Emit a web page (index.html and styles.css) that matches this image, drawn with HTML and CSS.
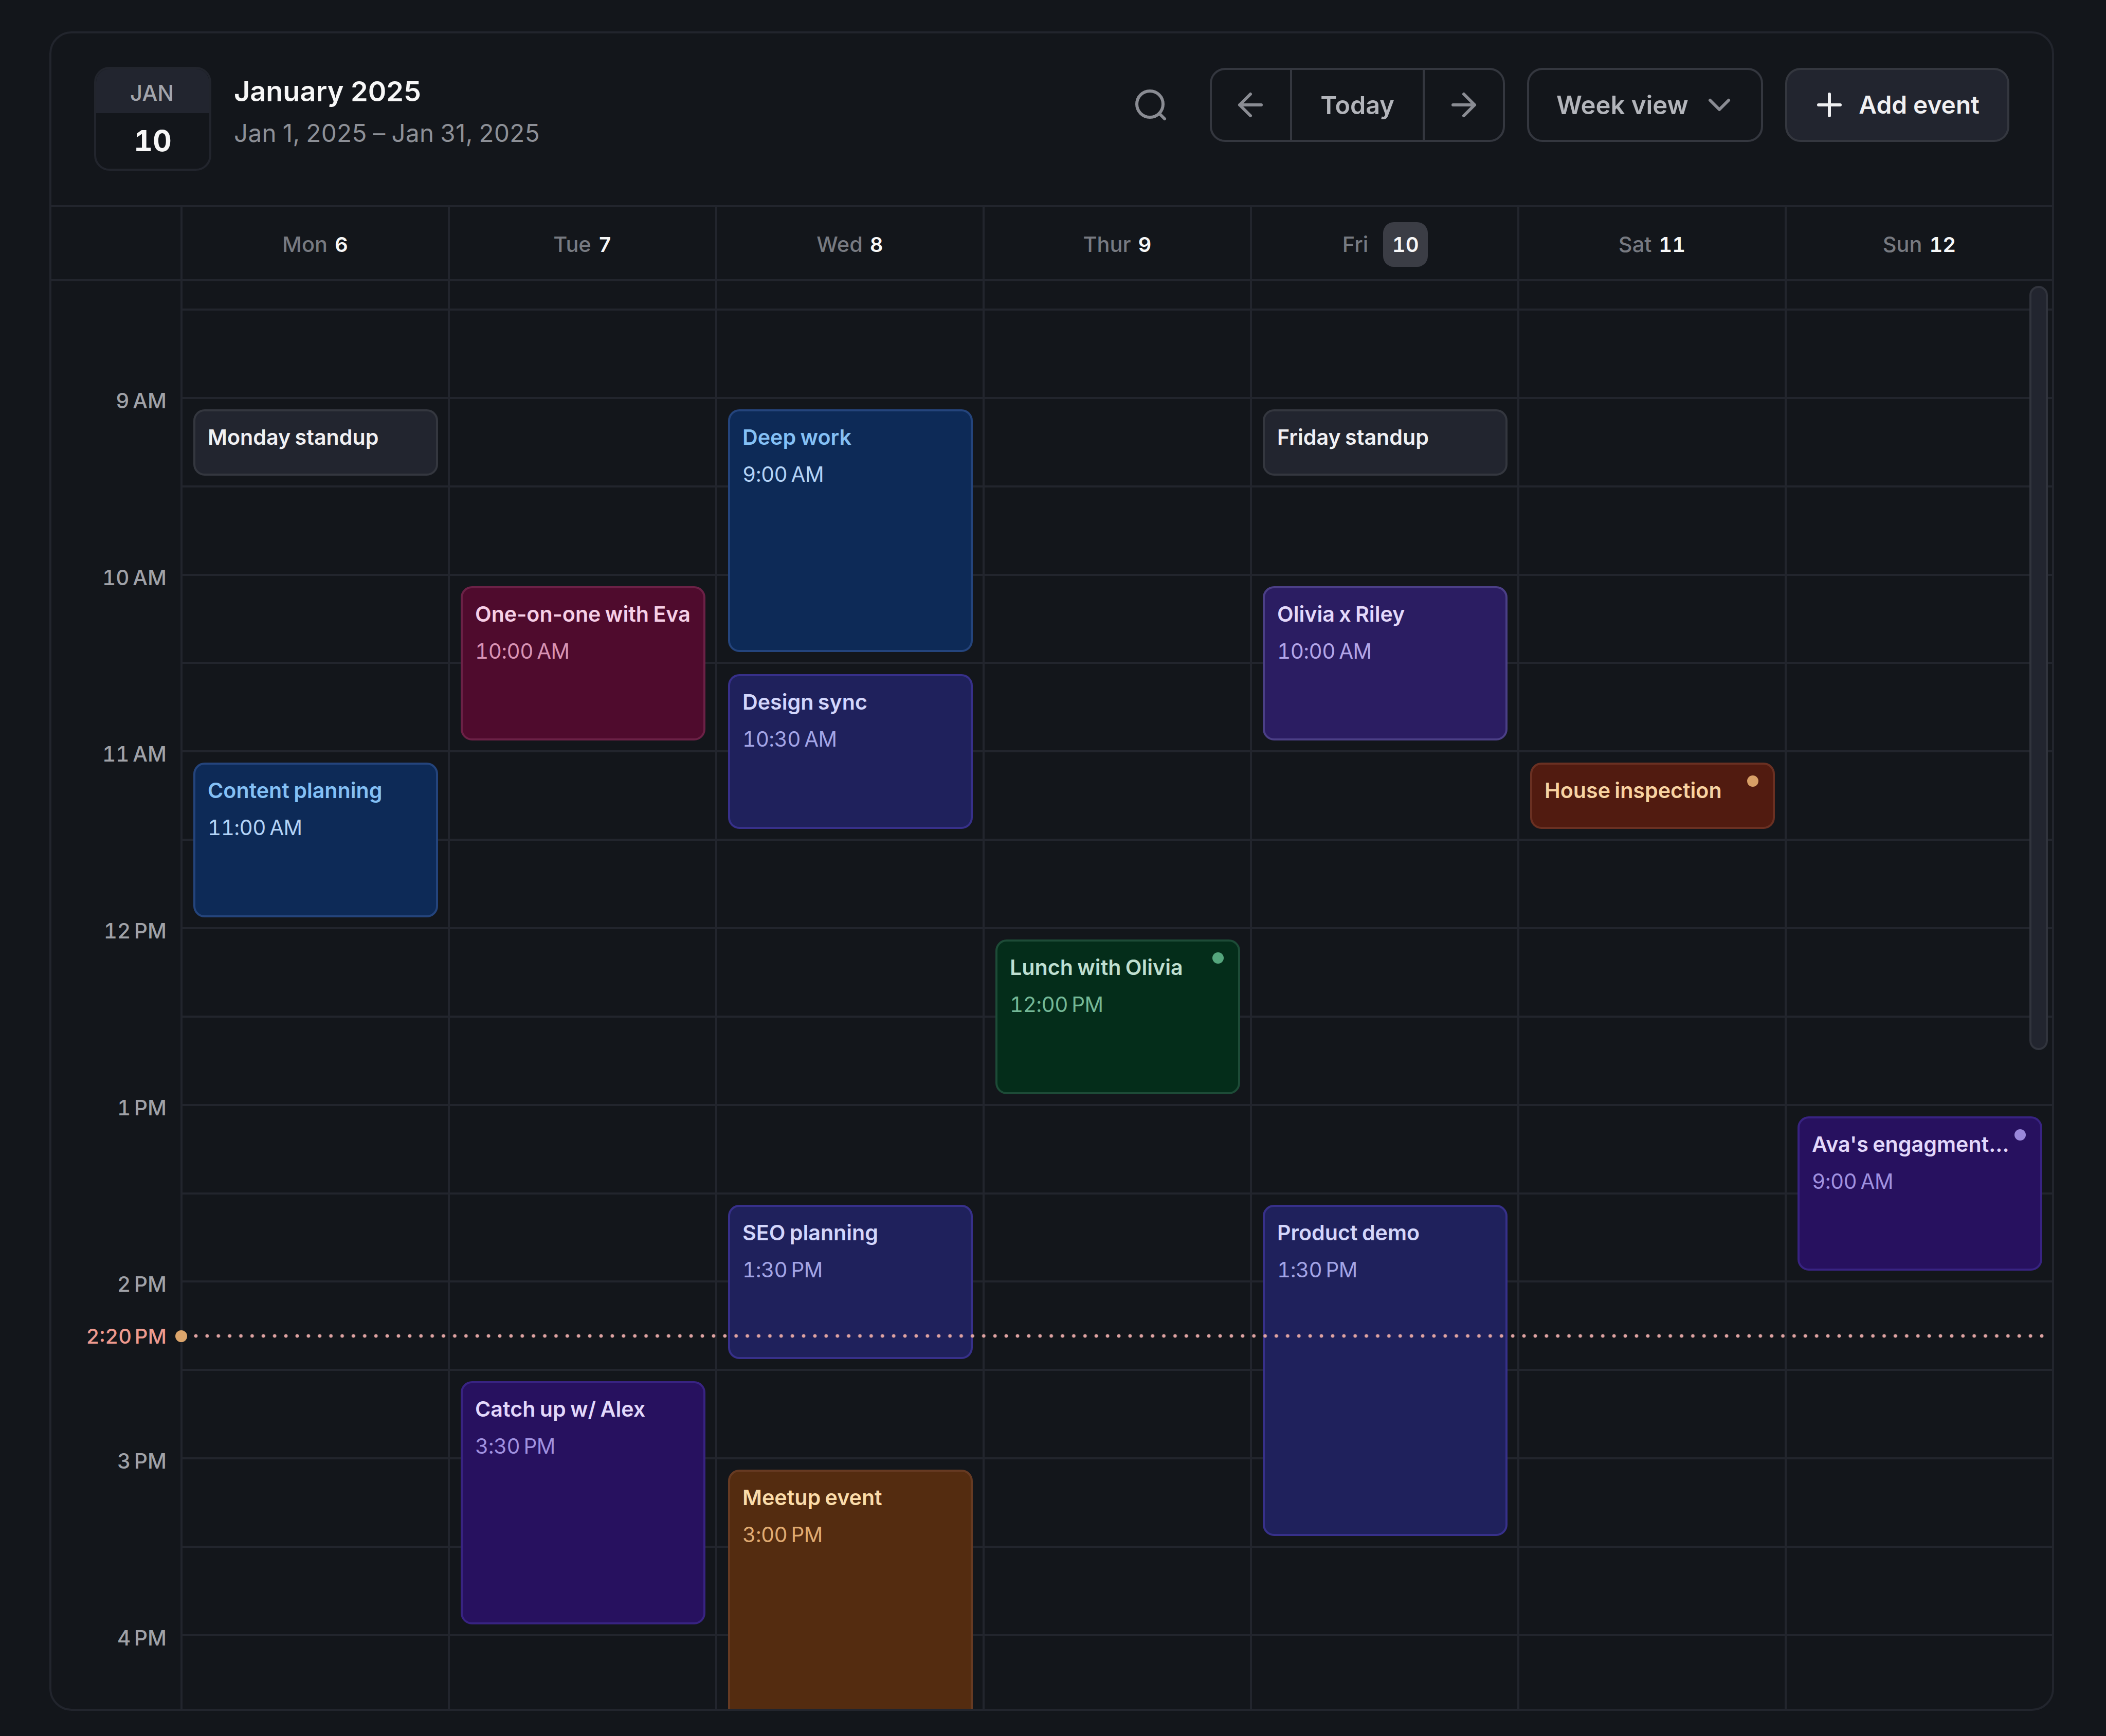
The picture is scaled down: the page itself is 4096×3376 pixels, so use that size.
FILE: index.html
```html
<!DOCTYPE html>
<html lang="en">
<head>
    <meta charset="UTF-8">
    <meta name="viewport" content="width=device-width, initial-scale=1.0">
    <title>Calendar - January 2025</title>
    <link rel="stylesheet" href="styles.css">
</head>
<body>
    <main class="calendar">
        <header class="calendar-header">
            <div class="date-badge">
                <span class="date-badge-month">JAN</span>
                <span class="date-badge-day">10</span>
            </div>
            <div class="heading">
                <h1 class="heading-title">January 2025</h1>
                <p class="heading-range">Jan 1, 2025 – Jan 31, 2025</p>
            </div>

            <div class="toolbar">
                <button class="icon-btn" aria-label="Search">
                    <svg class="icon" viewBox="0 0 24 24"><path d="M21 21l-3.5-3.5"/><circle cx="11.5" cy="11.5" r="8.5"/></svg>
                </button>
                <div class="btn-group">
                    <button class="group-btn group-arrow" aria-label="Previous week">
                        <svg class="icon" viewBox="0 0 24 24"><path d="M19 12H5M12 19l-7-7 7-7"/></svg>
                    </button>
                    <button class="group-btn group-today">Today</button>
                    <button class="group-btn group-arrow" aria-label="Next week">
                        <svg class="icon" viewBox="0 0 24 24"><path d="M5 12h14M12 5l7 7-7 7"/></svg>
                    </button>
                </div>
                <button class="btn btn-view">
                    Week view
                    <svg class="icon" viewBox="0 0 24 24"><path d="M6 9l6 6 6-6"/></svg>
                </button>
                <button class="btn btn-add">
                    <svg class="icon" viewBox="0 0 24 24"><path d="M12 5v14M5 12h14"/></svg>
                    Add event
                </button>
            </div>
        </header>

        <div class="weekdays">
            <div class="weekday-spacer"></div>
            <div class="weekday">Mon <b>6</b></div>
            <div class="weekday">Tue <b>7</b></div>
            <div class="weekday">Wed <b>8</b></div>
            <div class="weekday">Thur <b>9</b></div>
            <div class="weekday today">Fri <b>10</b></div>
            <div class="weekday">Sat <b>11</b></div>
            <div class="weekday">Sun <b>12</b></div>
        </div>

        <div class="week-body">
            <div class="hours">
                <span class="hour from-0900">9 AM</span>
                <span class="hour from-1000">10 AM</span>
                <span class="hour from-1100">11 AM</span>
                <span class="hour from-1200">12 PM</span>
                <span class="hour from-1300">1 PM</span>
                <span class="hour from-1400">2 PM</span>
                <span class="hour from-1500">3 PM</span>
                <span class="hour from-1600">4 PM</span>
            </div>

            <!-- half hour lines -->
            <div class="slots">
                <i></i><i></i><i></i><i></i><i></i><i></i><i></i><i></i>
                <i></i><i></i><i></i><i></i><i></i><i></i><i></i><i></i>
            </div>

            <div class="day mon">
                <article class="event gray from-0900 half-1">
                    <h2>Monday standup</h2>
                </article>
                <article class="event blue from-1100 half-2">
                    <h2>Content planning</h2>
                    <p>11:00 AM</p>
                </article>
            </div>

            <div class="day tue">
                <article class="event pink from-1000 half-2">
                    <h2>One-on-one with Eva</h2>
                    <p>10:00 AM</p>
                </article>
                <article class="event violet from-1430 half-3">
                    <h2>Catch up w/ Alex</h2>
                    <p>3:30 PM</p>
                </article>
            </div>

            <div class="day wed">
                <article class="event blue from-0900 half-3">
                    <h2>Deep work</h2>
                    <p>9:00 AM</p>
                </article>
                <article class="event indigo from-1030 half-2">
                    <h2>Design sync</h2>
                    <p>10:30 AM</p>
                </article>
                <article class="event indigo from-1330 half-2">
                    <h2>SEO planning</h2>
                    <p>1:30 PM</p>
                </article>
                <article class="event orange from-1500 half-4">
                    <h2>Meetup event</h2>
                    <p>3:00 PM</p>
                </article>
            </div>

            <div class="day thu">
                <article class="event green from-1200 half-2">
                    <h2>Lunch with Olivia</h2>
                    <p>12:00 PM</p>
                    <span class="event-dot"></span>
                </article>
            </div>

            <div class="day fri">
                <article class="event gray from-0900 half-1">
                    <h2>Friday standup</h2>
                </article>
                <article class="event purple from-1000 half-2">
                    <h2>Olivia x Riley</h2>
                    <p>10:00 AM</p>
                </article>
                <article class="event indigo from-1330 half-4">
                    <h2>Product demo</h2>
                    <p>1:30 PM</p>
                </article>
            </div>

            <div class="day sat">
                <article class="event red from-1100 half-1">
                    <h2>House inspection</h2>
                    <span class="event-dot"></span>
                </article>
            </div>

            <div class="day sun">
                <article class="event violet from-1300 half-2">
                    <h2>Ava's engagment...</h2>
                    <p>9:00 AM</p>
                    <span class="event-dot"></span>
                </article>
            </div>

            <div class="now">
                <span class="now-label">2:20 PM</span>
                <span class="now-dot"></span>
                <span class="now-line"></span>
            </div>
            <div class="scrollbar"></div>
        </div>
    </main>
</body>
</html>
```
FILE: styles.css
```css
:root {
    --bg: #13161b;
    --line: #22252d;
    --border: #34373f;
    --surface: #22252f;
    --gutter: 251px;
    --day: 520px;
    --row: 171.87px;
}

* {
    margin: 0;
    padding: 0;
    box-sizing: border-box;
}

body {
    width: 4096px;
    height: 3376px;
    padding: 61px 101px 48px 96px;
    background: var(--bg);
    color: #f7f7f7;
    font-family: 'Inter', 'Liberation Sans', sans-serif;
    overflow: hidden;
}

.calendar {
    display: flex;
    flex-direction: column;
    width: 3899px;
    height: 3266px;
    border: 4px solid var(--line);
    border-radius: 43px;
    overflow: hidden;
}

/* Header */
.calendar-header {
    display: flex;
    align-items: flex-start;
    height: 338px;
    flex: none;
    padding: 67px 83px 0 83px;
    border-bottom: 4px solid var(--line);
}

.date-badge {
    display: flex;
    flex-direction: column;
    width: 228px;
    height: 202px;
    margin-top: -2px;
    border: 4px solid var(--line);
    border-radius: 30px;
    overflow: hidden;
    text-align: center;
}

.date-badge-month {
    height: 86px;
    line-height: 93px;
    padding-right: 3px;
    background: var(--surface);
    color: #a3a5ac;
    font-size: 42px;
    font-weight: 500;
}

.date-badge-day {
    line-height: 107px;
    font-size: 57px;
    font-weight: 700;
    font-variant-numeric: tabular-nums;
}

.heading {
    margin-left: 44px;
}

.heading-title {
    font-size: 54px;
    font-weight: 600;
    line-height: 84px;
    margin-top: 4px;
}

.heading-range {
    color: #8d9097;
    font-size: 47.5px;
    line-height: 78px;
    word-spacing: -2px;
    letter-spacing: 0.4px;
}

.toolbar {
    display: flex;
    gap: 43px;
    margin-left: auto;
}

button {
    background: none;
    border: none;
    color: #b3b5bb;
    font-family: inherit;
    font-size: 48.5px;
    font-weight: 600;
    white-space: nowrap;
}

.icon {
    display: block;
    flex: none;
    width: 72px;
    height: 72px;
    fill: none;
    stroke: #8a8c93;
    stroke-width: 2;
    stroke-linecap: round;
    stroke-linejoin: round;
}

.icon-btn {
    display: flex;
    align-items: center;
    justify-content: center;
    width: 144px;
    height: 144px;
}

.btn-group {
    display: flex;
    width: 574px;
    height: 144px;
    border: 4px solid var(--border);
    border-radius: 30px;
}

.group-btn {
    display: flex;
    align-items: center;
    justify-content: center;
}

.group-arrow {
    width: 152px;
    padding-right: 2px;
}

.group-arrow:last-child {
    padding: 0;
}

.group-today {
    flex: 1;
    border-left: 4px solid var(--border);
    border-right: 4px solid var(--border);
}

.btn {
    display: flex;
    align-items: center;
    justify-content: space-between;
    height: 144px;
    border: 4px solid var(--border);
    border-radius: 30px;
}

.btn-view {
    width: 459px;
    padding: 0 45px 0 53px;
    font-size: 49px;
}

.btn-add {
    width: 436px;
    padding: 0 54px 0 46px;
    background: var(--surface);
    color: #f0f0f2;
    font-size: 47.8px;
}

.btn-add .icon {
    stroke: #f0f0f2;
}

/* Weekday row */
.weekdays {
    display: grid;
    grid-template-columns: var(--gutter) repeat(7, var(--day));
    height: 144px;
    flex: none;
    border-bottom: 4px solid var(--line);
}

.weekday {
    display: flex;
    align-items: center;
    justify-content: center;
    gap: 14px;
    padding-top: 4px;
    border-left: 4px solid var(--line);
    color: #777a81;
    font-size: 41.5px;
    font-weight: 500;
}

.weekday b {
    color: #f7f7f7;
    font-size: 40px;
    font-weight: 600;
    font-variant-numeric: tabular-nums;
}

.weekday.today {
    gap: 29px;
    padding-left: 2px;
}

.weekday.today b {
    width: 87px;
    height: 87px;
    border-radius: 21px;
    background: #3b3d45;
    line-height: 87px;
    text-align: center;
}

/* Week grid */
.week-body {
    position: relative;
    flex: 1;
    display: grid;
    grid-template-columns: var(--gutter) repeat(7, var(--day));
    grid-template-rows: 100%;
    min-height: 0;
    overflow: hidden;
}

.hours,
.day {
    grid-row: 1;
    display: grid;
    grid-template-rows: 53px repeat(17, var(--row));
}

.hours {
    grid-column: 1;
    padding-right: 27px;
}

.hour {
    height: 72px;
    margin-top: -28px;
    color: #a0a2a8;
    font-size: 40.5px;
    font-weight: 500;
    font-variant-numeric: tabular-nums;
    line-height: 72px;
    text-align: right;
    word-spacing: -4px;
}

.slots {
    grid-row: 1;
    grid-column: 2 / -1;
    display: grid;
    grid-template-rows: repeat(16, var(--row));
    padding-top: 53px;
}

.slots i {
    border-top: 4px solid var(--line);
}

.day {
    border-left: 4px solid var(--line);
    padding: 0 19px 0 21px;
}

.mon { grid-column: 2; }
.tue { grid-column: 3; }
.wed { grid-column: 4; }
.thu { grid-column: 5; }
.fri { grid-column: 6; }
.sat { grid-column: 7; }
.sun { grid-column: 8; }

.from-0900 { grid-row-start: 3; }
.from-1000 { grid-row-start: 5; }
.from-1030 { grid-row-start: 6; }
.from-1100 { grid-row-start: 7; }
.from-1200 { grid-row-start: 9; }
.from-1300 { grid-row-start: 11; }
.from-1330 { grid-row-start: 12; }
.from-1400 { grid-row-start: 13; }
.from-1430 { grid-row-start: 14; }
.from-1500 { grid-row-start: 15; }
.from-1600 { grid-row-start: 17; }

.half-1 { grid-row-end: span 1; }
.half-2 { grid-row-end: span 2; }
.half-3 { grid-row-end: span 3; }
.half-4 { grid-row-end: span 4; }

/* Events */
.event {
    position: relative;
    margin: 24px 0 19px;
    padding: 14px 0 0 24px;
    border: 4px solid;
    border-radius: 22px;
    white-space: nowrap;
}

.event h2 {
    font-size: 41.2px;
    font-weight: 600;
    line-height: 72px;
    word-spacing: -2px;
}

.event p {
    font-size: 40.5px;
    font-variant-numeric: tabular-nums;
    letter-spacing: -0.6px;
    line-height: 73px;
    word-spacing: -3px;
}

.event-dot {
    position: absolute;
    top: 21px;
    right: 28px;
    width: 22px;
    height: 22px;
    border-radius: 50%;
}

.gray { background: #22252f; border-color: #34373f; color: #f0f0f3; }

.blue { background: #0d2a57; border-color: #24447c; color: #84c0f5; }
.blue p { color: #b3d3f6; }

.pink { background: #4f0b2d; border-color: #6b2146; color: #f6cfe6; }
.pink p { color: #d993b4; }

.indigo { background: #1f215c; border-color: #37308a; color: #d3d6fb; }
.indigo p { color: #a3a5e6; }

.purple { background: #2b1d62; border-color: #4b3f86; color: #e4d9fa; }
.purple p { color: #b3a6e8; }

.violet { background: #27115f; border-color: #382382; color: #e2d8fb; }
.violet p { color: #a091e0; }
.violet .event-dot { background: #9a88da; }

.green { background: #042d1a; border-color: #1d4b37; color: #bfdfd0; }
.green p { color: #74b897; }
.green .event-dot { background: #55a67d; }

.red { background: #511b10; border-color: #6a3022; color: #f8d3a2; }
.red .event-dot { background: #d9a067; }

.orange { background: #542c10; border-color: #663a22; color: #fbdcaa; }
.orange p { color: #e0ab72; }

/* Current time */
.now {
    position: absolute;
    top: 2015px;
    left: 0;
    display: flex;
    align-items: center;
    height: 72px;
}

.now-label {
    width: 224px;
    color: #ee9a8f;
    font-size: 40px;
    font-weight: 500;
    font-variant-numeric: tabular-nums;
    text-align: right;
    word-spacing: -5px;
}

.now-dot {
    width: 23px;
    height: 23px;
    margin-left: 17px;
    border-radius: 50%;
    background: #dca56c;
}

.now-line {
    width: 3613px;
    height: 22px;
    margin-left: 6px;
    background: radial-gradient(circle, #dfa3a2 2.8px, transparent 4px) 0 0 / 21.9px 22px repeat-x;
}

.scrollbar {
    position: absolute;
    top: 9px;
    right: 8px;
    width: 36px;
    height: 1486px;
    border: 4px solid #31343d;
    border-radius: 18px;
    background: var(--surface);
}
```
